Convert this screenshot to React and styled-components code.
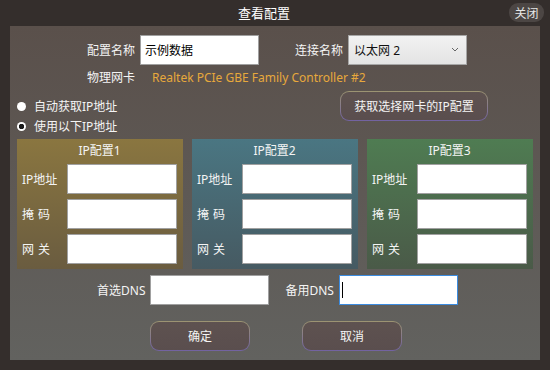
import React from 'react';
import styled, { createGlobalStyle } from 'styled-components';

const GlobalStyle = createGlobalStyle`
  html, body {
    margin: 0;
    padding: 0;
    background: #342e2c;
  }
  body {
    font-family: "Noto Sans", "Noto Sans CJK SC", sans-serif;
    font-size: 12px;
    color: #f2f2f2;
  }
`;

const groups = [
  { title: 'IP配置1', top: '#8a7640', bottom: '#6a5c40' },
  { title: 'IP配置2', top: '#4a7682', bottom: '#465a62' },
  { title: 'IP配置3', top: '#4f7c52', bottom: '#4a5a48' },
];

function App() {
  return (
    <Window>
      <GlobalStyle />
      <TitleBar>
        <Title>查看配置</Title>
        <CloseButton>关闭</CloseButton>
      </TitleBar>
      <Panel>
        <NameRow>
          <Label>配置名称</Label>
          <TextBox defaultValue="示例数据" />
          <Label $gap={36}>连接名称</Label>
          <SelectBox>
            <span>以太网 2</span>
            <svg width="8" height="5" viewBox="0 0 8 5">
              <path d="M1 1 L4 4 L7 1" fill="none" stroke="#666" strokeWidth="1" />
            </svg>
          </SelectBox>
        </NameRow>
        <CardRow>
          <Label>物理网卡</Label>
          <CardName>Realtek PCIe GBE Family Controller #2</CardName>
        </CardRow>
        <ModeRow>
          <RadioList>
            <RadioItem>
              <RadioDot />
              自动获取IP地址
            </RadioItem>
            <RadioItem>
              <RadioDot $checked />
              使用以下IP地址
            </RadioItem>
          </RadioList>
          <ActionButton $width={148}>获取选择网卡的IP配置</ActionButton>
        </ModeRow>
        <GroupRow>
          {groups.map((g) => (
            <Group key={g.title} $top={g.top} $bottom={g.bottom}>
              <GroupTitle>{g.title}</GroupTitle>
              <FieldRow>
                <FieldLabel>IP地址</FieldLabel>
                <FieldInput />
              </FieldRow>
              <FieldRow>
                <FieldLabel $spaced>掩码</FieldLabel>
                <FieldInput />
              </FieldRow>
              <FieldRow>
                <FieldLabel $spaced>网关</FieldLabel>
                <FieldInput />
              </FieldRow>
            </Group>
          ))}
        </GroupRow>
        <DnsRow>
          <Label>首选DNS</Label>
          <TextBox />
          <Label $gap={16}>备用DNS</Label>
          <FocusBox>
            <TextBox $focused />
            <Caret />
          </FocusBox>
        </DnsRow>
        <ButtonRow>
          <ActionButton $width={100}>确定</ActionButton>
          <ActionButton $width={100}>取消</ActionButton>
        </ButtonRow>
      </Panel>
    </Window>
  );
}

const Window = styled.div`
  width: 550px;
  height: 370px;
  background: #342e2c;
  display: flex;
  flex-direction: column;
  overflow: hidden;
`;

const TitleBar = styled.div`
  position: relative;
  height: 26px;
  display: flex;
  align-items: center;
  justify-content: center;
`;

const Title = styled.div`
  font-family: "Noto Sans CJK SC", sans-serif;
  font-size: 13px;
  color: #ffffff;
  margin-left: -22px;
  margin-top: -1px;
`;

const CloseButton = styled.div`
  position: absolute;
  right: 6px;
  top: 3px;
  width: 35px;
  height: 19px;
  border-radius: 9px;
  background: #4c4644;
  color: #e6e6e6;
  font-family: "Noto Sans CJK SC", sans-serif;
  font-size: 12px;
  display: flex;
  align-items: center;
  justify-content: center;
`;

const Panel = styled.div`
  margin: 0 10px;
  height: 334px;
  background: linear-gradient(#5a504b, #62625f);
  padding: 9px 7px 0;
  box-sizing: border-box;
  display: flex;
  flex-direction: column;
`;

const NameRow = styled.div`
  display: flex;
  align-items: center;
  height: 29px;
  padding-left: 70px;
`;

const Label = styled.span`
  font-family: "Noto Sans", "Noto Sans CJK SC", sans-serif;
  font-size: 12px;
  color: #f4f4f4;
  white-space: nowrap;
  margin-left: ${(p) => (p.$gap ? `${p.$gap}px` : '0')};
  margin-right: 5px;
`;

const TextBox = styled.input`
  width: 119px;
  height: 30px;
  box-sizing: border-box;
  border: 1px solid ${(p) => (p.$focused ? '#3c8ce0' : '#a0a0a0')};
  background: #ffffff;
  font-family: "Noto Sans CJK SC", sans-serif;
  font-size: 12px;
  color: #000;
  padding: 0 4px;
  outline: none;
`;

const FocusBox = styled.div`
  position: relative;
  display: flex;
`;

const Caret = styled.div`
  position: absolute;
  left: 3px;
  top: 7px;
  width: 1px;
  height: 16px;
  background: #000;
`;

const SelectBox = styled.div`
  width: 119px;
  height: 30px;
  box-sizing: border-box;
  border: 1px solid #a6a6a6;
  background: linear-gradient(#f2f2f2, #e4e4e4);
  color: #111;
  font-family: "Noto Sans", "Noto Sans CJK SC", sans-serif;
  font-size: 12px;
  display: flex;
  align-items: center;
  justify-content: space-between;
  padding: 0 7px 0 5px;
`;

const CardRow = styled.div`
  display: flex;
  align-items: center;
  height: 20px;
  margin-top: 3px;
  padding-left: 70px;
`;

const CardName = styled.span`
  color: #e7a93c;
  font-family: "Noto Sans", sans-serif;
  font-size: 12px;
  margin-left: 12px;
`;

const ModeRow = styled.div`
  display: flex;
  justify-content: space-between;
  align-items: flex-start;
  margin-top: 4px;
  height: 48px;
  padding-right: 45px;
`;

const RadioList = styled.div`
  display: flex;
  flex-direction: column;
  gap: 2px;
  margin-top: 6px;
`;

const RadioItem = styled.div`
  display: flex;
  align-items: center;
  gap: 8px;
  height: 18px;
  font-family: "Noto Sans", "Noto Sans CJK SC", sans-serif;
  font-size: 12px;
  color: #f4f4f4;
`;

const RadioDot = styled.span`
  width: 9px;
  height: 9px;
  border-radius: 50%;
  background: ${(p) =>
    p.$checked ? 'radial-gradient(circle, #1a1a1a 0 2.5px, #ffffff 3px)' : '#ffffff'};
`;

const ActionButton = styled.div`
  width: ${(p) => p.$width}px;
  height: 30px;
  box-sizing: border-box;
  border-radius: 9px;
  border: 1px solid transparent;
  background: linear-gradient(#5e5250, #5a4e4e) padding-box,
    linear-gradient(#9c9472, #7262a2) border-box;
  color: #f4f4f4;
  font-family: "Noto Sans", "Noto Sans CJK SC", sans-serif;
  font-size: 12px;
  display: flex;
  align-items: center;
  justify-content: center;
`;

const GroupRow = styled.div`
  display: flex;
  gap: 9px;
`;

const Group = styled.div`
  width: 166px;
  height: 130px;
  box-sizing: border-box;
  background: linear-gradient(${(p) => p.$top}, ${(p) => p.$bottom});
  padding: 0 6px 0 5px;
  display: flex;
  flex-direction: column;
  gap: 5px;
`;

const GroupTitle = styled.div`
  height: 20px;
  display: flex;
  align-items: flex-end;
  justify-content: center;
  font-family: "Noto Sans", "Noto Sans CJK SC", sans-serif;
  font-size: 12px;
  color: #f4f4f4;
`;

const FieldRow = styled.div`
  display: flex;
  align-items: center;
  justify-content: space-between;
`;

const FieldLabel = styled.span`
  font-family: "Noto Sans", "Noto Sans CJK SC", sans-serif;
  font-size: 12px;
  color: #f4f4f4;
  letter-spacing: ${(p) => (p.$spaced ? '4px' : '0')};
`;

const FieldInput = styled.input`
  width: 110px;
  height: 30px;
  box-sizing: border-box;
  border: 1px solid #a0a0a0;
  background: #ffffff;
  outline: none;
`;

const DnsRow = styled.div`
  display: flex;
  align-items: center;
  margin-top: 6px;
  padding-left: 80px;
  height: 30px;
`;

const ButtonRow = styled.div`
  display: flex;
  gap: 52px;
  margin-top: 16px;
  padding-left: 133px;
`;

export default App;
